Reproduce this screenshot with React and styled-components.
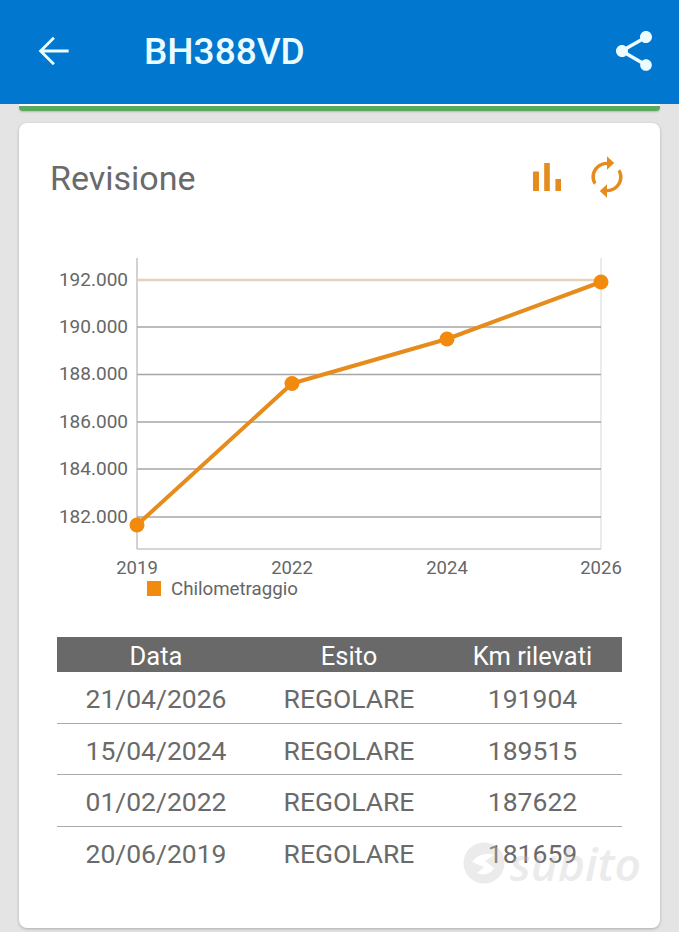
import React from "react";
import styled, {createGlobalStyle} from "styled-components";

const years = [
    {label: "2019", x: 137, y: 525},
    {label: "2022", x: 292, y: 383.5},
    {label: "2024", x: 447, y: 339},
    {label: "2026", x: 601, y: 282},
];

const ticks = [
    {label: "192.000", y: 280},
    {label: "190.000", y: 327},
    {label: "188.000", y: 374.5},
    {label: "186.000", y: 422},
    {label: "184.000", y: 469},
    {label: "182.000", y: 517},
];

const rows = [
    {date: "21/04/2026", km: "191904"},
    {date: "15/04/2024", km: "189515"},
    {date: "01/02/2022", km: "187622"},
    {date: "20/06/2019", km: "181659"},
];

export default function App() {
    return (
        <Page>
            <GlobalStyle/>
            <TopBar>
                <BackIcon viewBox="0 0 24 24">
                    <path d="M20 11.2H6.6l5.9-5.9L11.4 4.2 3.6 12l7.8 7.8 1.1-1.1-5.9-5.9H20z"/>
                </BackIcon>
                <Plate>BH388VD</Plate>
                <ShareIcon viewBox="0 0 24 24">
                    <path d="M18 16.08c-.76 0-1.44.3-1.96.77L8.91 12.7c.05-.23.09-.46.09-.7s-.04-.47-.09-.7l7.05-4.11c.54.5 1.25.81 2.04.81 1.66 0 3-1.34 3-3s-1.34-3-3-3-3 1.34-3 3c0 .24.04.47.09.7L8.04 9.81C7.5 9.31 6.79 9 6 9c-1.66 0-3 1.34-3 3s1.34 3 3 3c.79 0 1.5-.31 2.04-.81l7.12 4.16c-.05.21-.08.43-.08.65 0 1.61 1.31 2.92 2.92 2.92 1.61 0 2.92-1.31 2.92-2.92s-1.31-2.92-2.92-2.92z"/>
                </ShareIcon>
            </TopBar>
            <GreenStrip/>
            <Card>
                <CardHead>
                    <CardTitle>Revisione</CardTitle>
                    <CardActions>
                        <ActionIcon viewBox="0 0 24 24">
                            <path d="M5 9.2h3V19H5zM10.6 5h2.8v14h-2.8zm5.6 8H19v6h-2.8z"/>
                        </ActionIcon>
                        <ActionIcon viewBox="0 0 24 24">
                            {/* clockwise arrows, head of the top arc points right */}
                            <path d="M12 4.4V1.6L15.6 5 12 8.4V6C8.7 6 6 8.7 6 12c0 1 .25 1.9.7 2.7l-1.2 1.2C4.6 14.8 4.2 13.4 4.2 12c0-4.3 3.5-7.6 7.8-7.6zM12 19.6v2.8L8.4 19l3.6-3.4V18c3.3 0 6-2.7 6-6 0-1-.25-1.9-.7-2.7l1.2-1.2c.9 1.1 1.3 2.5 1.3 3.9 0 4.3-3.5 7.6-7.8 7.6z"/>
                        </ActionIcon>
                    </CardActions>
                </CardHead>
                <Chart viewBox="19 250 641 355">
                    <line x1="137" y1="258" x2="137" y2="549" stroke="#b4b4b4" strokeWidth="1.2"/>
                    <line x1="601" y1="258" x2="601" y2="549" stroke="#dedede" strokeWidth="1.2"/>
                    <line x1="137" y1="549" x2="601" y2="549" stroke="#c8c8c8" strokeWidth="1.5"/>
                    {ticks.map(({label, y}, i) => (
                        <g key={label}>
                            <line x1="137" y1={y} x2="601" y2={y}
                                  stroke={i === 0 ? "#e3d4b8" : "#a6a6a6"}
                                  strokeWidth={i === 0 ? 2.5 : 1.3}/>
                            <text x="128" y={y + 5.5} textAnchor="end" fontSize="19" fill="#666">{label}</text>
                        </g>
                    ))}
                    <polyline points={years.map(({x, y}) => `${x},${y}`).join(" ")}
                              fill="none" stroke="#e58c1c" strokeWidth="4" strokeLinejoin="round"/>
                    {years.map(({label, x, y}) => (
                        <g key={label}>
                            <circle cx={x} cy={y} r="7.5" fill="#f28a0e"/>
                            <text x={x} y="574" textAnchor="middle" fontSize="18.5" fill="#666">{label}</text>
                        </g>
                    ))}
                    <rect x="147" y="581" width="14" height="15" fill="#f28a0e"/>
                    <text x="171" y="595" fontSize="18.7" fill="#666">Chilometraggio</text>
                </Chart>
                <Table>
                    <HeadRow>
                        <span>Data</span>
                        <span>Esito</span>
                        <span>Km rilevati</span>
                    </HeadRow>
                    {rows.map(({date, km}) => (
                        <Row key={date}>
                            <span>{date}</span>
                            <span>REGOLARE</span>
                            <span>{km}</span>
                        </Row>
                    ))}
                </Table>
                <Watermark>
                    <svg width="42" height="42" viewBox="0 0 42 42">
                        <circle cx="21" cy="21" r="20.5" fill="#c4c4c4"/>
                        <path d="M9 20c6-8 15-9 22-7l-9 6 9 7c-3 6-11 8-17 5l7-6z" fill="#fff"/>
                    </svg>
                    <WatermarkText>subito</WatermarkText>
                </Watermark>
            </Card>
        </Page>
    );
}

const GlobalStyle = createGlobalStyle`
  html, body {
    margin: 0;
    padding: 0;
  }

  body {
    font-family: Roboto, "Liberation Sans", sans-serif;
    background: #e4e4e4;
  }
`

const Page = styled.div`
  width: 679px;
  height: 932px;
  overflow: hidden;
  background: #e4e4e4;
`

const TopBar = styled.header`
  height: 104px;
  box-sizing: border-box;
  padding: 0 21px 0 32px;
  display: flex;
  align-items: center;
  background: #0277d0;
  color: #eafcff;
`

const BackIcon = styled.svg`
  width: 44px;
  height: 44px;
  margin-top: -2px;
  fill: currentColor;
`

const Plate = styled.h1`
  flex: 1;
  margin: -2px 0 0 68px;
  font-size: 37px;
  font-weight: 500;
`

const ShareIcon = styled.svg`
  width: 48px;
  height: 48px;
  margin-top: -2px;
  fill: currentColor;
`

const GreenStrip = styled.div`
  height: 5px;
  margin: 2px 19px 0;
  background: #5aa95f;
  border-radius: 0 0 4px 4px;
  box-shadow: 0 1px 2px rgba(0, 0, 0, 0.2), 0 -2px 0 #fff;
`

const Card = styled.section`
  position: relative;
  margin: 12px 19px 0;
  padding: 30px 0 50px;
  background: #fff;
  border-radius: 8px;
  box-shadow: 0 1px 3px rgba(0, 0, 0, 0.25);
`

const CardHead = styled.div`
  height: 48px;
  padding: 0 29px 0 31px;
  display: flex;
  align-items: center;
  justify-content: space-between;
`

const CardTitle = styled.h2`
  margin: 2px 0 0;
  font-size: 34px;
  font-weight: 400;
  color: #6a6a6a;
`

const CardActions = styled.div`
  display: flex;
  gap: 12px;
`

const ActionIcon = styled.svg`
  width: 48px;
  height: 48px;
  fill: #e48c1e;
`

const Chart = styled.svg`
  display: block;
  width: 641px;
  height: 355px;
  margin: 49px 0 32px;
  font-family: Roboto, sans-serif;
`

const Table = styled.div`
  margin: 0 38px;
`

const HeadRow = styled.div`
  height: 35px;
  padding-top: 2px;
  box-sizing: border-box;
  display: grid;
  grid-template-columns: 198px 188px 179px;
  align-items: center;
  text-align: center;
  background: #696969;
  color: #fff;
  font-size: 25.5px;
`

const Row = styled.div`
  height: 51.5px;
  padding-top: 3px;
  box-sizing: border-box;
  display: grid;
  grid-template-columns: 198px 188px 179px;
  align-items: center;
  text-align: center;
  color: #6a6a6a;
  font-size: 26.5px;
  border-bottom: 1.5px solid #aaa;

  &:last-child {
    border-bottom: none;
  }
`

const Watermark = styled.div`
  position: absolute;
  left: 444px;
  top: 719px;
  display: flex;
  align-items: center;
  gap: 5px;
  opacity: 0.32;
  pointer-events: none;
`

const WatermarkText = styled.span`
  font-family: "Open Sans", sans-serif;
  font-size: 46px;
  font-weight: 600;
  font-style: italic;
  line-height: 42px;
  color: #c4c4c4;
`
